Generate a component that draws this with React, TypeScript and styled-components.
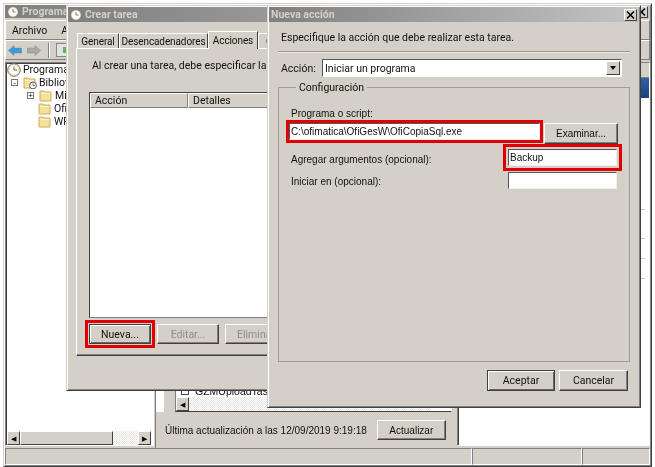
import styled, { createGlobalStyle } from 'styled-components';

const GlobalStyle = createGlobalStyle`
  html, body { margin: 0; padding: 0; background: #fff; }
  * { box-sizing: border-box; }
`;

const face = '#d4d0c8';
const tahoma = `Roboto, "Open Sans", sans-serif`;
const arial = `"Liberation Sans", Arial, sans-serif`;

const Desktop = styled.div`
  position: relative;
  width: 655px;
  height: 467px;
  background: #fff;
  overflow: hidden;
  font-family: ${tahoma};
  font-size: 10.5px;
  color: #111;
  filter: blur(0.35px);
`;

const Win = styled.div<{ $l: number; $t: number; $w: number; $h: number }>`
  position: absolute;
  isolation: isolate;
  left: ${(p) => p.$l}px;
  top: ${(p) => p.$t}px;
  width: ${(p) => p.$w}px;
  height: ${(p) => p.$h}px;
  background: ${face};
  border: 1px solid;
  border-color: ${face} #404040 #404040 ${face};
  box-shadow: inset 1px 1px 0 #fff, inset -1px -1px 0 #808080;
  padding: 1px;
  display: flex;
  flex-direction: column;
  overflow: hidden;
`;

const Title = styled.div<{ $h?: number }>`
  flex: none;
  height: ${(p) => p.$h ?? 15}px;
  display: flex;
  align-items: center;
  gap: 3px;
  padding: 0 2px;
  background: linear-gradient(90deg, #808080, #c4c4c4);
  color: ${face};
  font-family: ${tahoma};
  font-weight: 700;
  font-size: 10.5px;
  white-space: nowrap;
`;

const TitleText = styled.span`
  flex: 1;
`;

const CloseBtn = styled.div`
  flex: none;
  width: 13px;
  height: 12px;
  background: ${face};
  border: 1px solid;
  border-color: #fff #404040 #404040 #fff;
  color: #000;
  display: grid;
  place-items: center;
  svg { display: block; }
`;

const Close = () => (
  <CloseBtn>
    <svg width="9" height="8" viewBox="0 0 9 8">
      <path d="M1 0.5 L8 7.5 M8 0.5 L1 7.5" stroke="#000" strokeWidth="1.5" />
    </svg>
  </CloseBtn>
);

const ClockIcon = ({ size = 14 }: { size?: number }) => (
  <svg width={size} height={size} viewBox="0 0 14 14" style={{ flex: 'none' }}>
    <circle cx="7" cy="7" r="6.3" fill="#efe6c8" stroke="#7a7466" />
    <circle cx="7" cy="7" r="4.4" fill="#fff" />
    <path d="M7 3.5 V7 H10" stroke="#666" strokeWidth="1" fill="none" />
  </svg>
);

const FolderIcon = ({ clock }: { clock?: boolean }) => (
  <svg width="14" height="13" viewBox="0 0 14 13" style={{ flex: 'none' }}>
    <path d="M1 2 H5 L6 3 H12 V12 H1 Z" fill="#f6e09a" stroke="#c9ae62" />
    <path d="M2 4.5 H11" stroke="#fdf2c4" />
    {clock && (
      <>
        <circle cx="10" cy="9.5" r="3.4" fill="#fff" stroke="#555" />
        <path d="M10 7.5 V9.5 H12" stroke="#555" fill="none" strokeWidth="0.8" />
      </>
    )}
  </svg>
);

// ---- main window

const MenuBar = styled.div`
  flex: none;
  height: 20px;
  margin-top: 2px;
  display: flex;
  align-items: center;
  gap: 14px;
  padding-left: 6px;
  border: 1px solid;
  border-color: #fff #808080 #808080 #fff;
`;

const ToolBar = styled.div`
  flex: none;
  height: 20px;
  display: flex;
  align-items: center;
  gap: 5px;
  padding-left: 2px;
  border: 1px solid;
  border-color: #fff #808080 #808080 #fff;
`;

const ToolSep = styled.div`
  width: 2px;
  height: 15px;
  margin: 0 1px 0 2px;
  border-left: 1px solid #808080;
  border-right: 1px solid #fff;
`;

const ToolButton = styled.div`
  width: 15px;
  height: 14px;
  background: #dfe3e6;
  border: 1px solid #8a8a8a;
  display: flex;
  align-items: center;
  justify-content: flex-end;
  padding-right: 2px;
`;

const ToolDot = styled.div`
  width: 5px;
  height: 6px;
  background: #6fae5a;
`;

const Arrow = ({ fill, flip }: { fill: string; flip?: boolean }) => (
  <svg width="14" height="11" viewBox="0 0 14 11" style={{ transform: flip ? 'scaleX(-1)' : undefined }}>
    <path d="M0.5 5.5 L6 0.5 V3 H13.5 V8 H6 V10.5 Z" fill={fill} stroke="#777" strokeWidth="0.4" />
  </svg>
);

const Body = styled.div`
  flex: 1;
  min-height: 0;
  display: grid;
  grid-template-columns: 149px 303px 1fr;
  gap: 0;
  padding-top: 2px;
`;

const Inset = styled.div`
  border: 1px solid;
  border-color: #808080 #fff #fff #808080;
  box-shadow: inset 1px 1px 0 #404040;
`;

const TreePane = styled(Inset)`
  background: #fff;
  display: flex;
  flex-direction: column;
  padding: 0 2px 0 1px;
  margin-bottom: 2px;
`;

const TreeRow = styled.div<{ $depth: number }>`
  flex: none;
  height: 13px;
  display: flex;
  align-items: center;
  gap: 2px;
  padding-left: ${(p) => p.$depth}px;
  white-space: nowrap;
  font-size: 10.5px;
`;

const Expander = styled.div`
  flex: none;
  width: 7px;
  height: 7px;
  margin-right: 3px;
  border: 1px solid #777;
  font: 8px/5px ${arial};
  text-align: center;
  color: #000;
`;

const TreeSpacer = styled.div`
  flex: 1;
`;

const ScrollBar = styled.div`
  flex: none;
  height: 14px;
  display: flex;
`;

const ScrollBtn = styled.div`
  flex: none;
  width: 13px;
  background: ${face};
  border: 1px solid;
  border-color: #fff #404040 #404040 #fff;
  display: grid;
  place-items: center;
  font: 7px/1 ${arial};
  color: #000;
`;

const Thumb = styled(ScrollBtn)<{ $w: string }>`
  width: ${(p) => p.$w};
`;

const Track = styled.div`
  flex: 1;
  background: repeating-conic-gradient(#e8e6e0 0% 25%, #fff 0% 50%) 0 0 / 2px 2px;
`;

const MiddlePane = styled.div`
  display: flex;
  flex-direction: column;
  border-left: 1px solid #808080;
  margin-left: 1px;
`;

const MiddleTop = styled.div`
  flex: 1;
  min-height: 0;
  display: flex;
`;

const WhiteStrip = styled.div`
  flex: none;
  width: 8px;
  background: #fff;
`;

const TaskBox = styled.div`
  flex: 1;
  margin: 0 5px 0 11px;
  border: 1px solid;
  border-color: #808080 #fff #404040 #808080;
  background: #fff;
  display: flex;
  flex-direction: column;
  justify-content: flex-end;
`;

const TaskRow = styled.div`
  display: flex;
  align-items: center;
  gap: 6px;
  height: 13px;
  padding-left: 5px;
  font-family: ${arial};
  font-size: 10.5px;
`;

const TaskCheck = styled.div`
  width: 8px;
  height: 8px;
  border: 1px solid #444;
`;

const TaskScroll = styled(ScrollBar)`
  padding-right: 20px;
`;

const MiddleFooter = styled.div`
  flex: none;
  height: 36px;
  display: flex;
  align-items: center;
  gap: 10px;
  padding: 0 0 0 9px;
  font-family: ${arial};
  font-size: 10px;
  white-space: nowrap;
`;

const RightPane = styled(Inset)`
  background: #fff;
  display: flex;
  flex-direction: column;
  margin: 0 0 2px 0;
`;

const RightHead = styled.div`
  flex: none;
  height: 15px;
  background: ${face};
  border-bottom: 1px solid #808080;
`;

const RightBlue = styled.div`
  flex: none;
  height: 20px;
  background: linear-gradient(#2e62a8, #1d3f7d);
`;

const RightRows = styled.div`
  display: flex;
  flex-direction: column;
  align-items: flex-end;
  padding-right: 4px;
`;

const RightTick = styled.div<{ $top: number }>`
  width: 5px;
  height: 1px;
  margin-top: ${(p) => p.$top}px;
  background: #c4c4c4;
`;

const RightArrow = styled.div`
  width: 0;
  height: 0;
  margin: 7px 4px 0 0;
  border: 3.5px solid transparent;
  border-left: 4px solid #000;
  border-right: 0;
`;

const StatusBar = styled.div`
  flex: none;
  height: 17px;
  display: grid;
  grid-template-columns: 467px 110px 1fr;
`;

const StatusCell = styled.div`
  border: 1px solid;
  border-color: #808080 #fff #fff #808080;
`;

// ---- crear tarea

const TabStrip = styled.div`
  flex: none;
  height: 23px;
  display: flex;
  align-items: flex-end;
  padding: 0 0 0 9px;
  margin-top: 3px;
`;

const Tab = styled.div<{ $on?: boolean; $w: number }>`
  flex: none;
  width: ${(p) => p.$w}px;
  height: ${(p) => (p.$on ? 18 : 15)}px;
  margin-bottom: ${(p) => (p.$on ? -1 : 0)}px;
  display: grid;
  place-items: center;
  background: ${face};
  border: 1px solid;
  border-bottom: 0;
  border-color: #fff #404040 transparent #fff;
  font-size: 10px;
  letter-spacing: -0.1px;
  white-space: nowrap;
  position: relative;
  z-index: ${(p) => (p.$on ? 1 : 0)};
`;

const TabPage = styled.div`
  flex: none;
  height: 308px;
  margin: 0 8px;
  border: 1px solid;
  border-color: #fff #404040 #404040 #fff;
  box-shadow: inset -1px -1px 0 #808080;
  padding: 0 12px;
  display: flex;
  flex-direction: column;
`;

const Lead = styled.div`
  height: 43px;
  padding: 10px 3px 0;
  white-space: nowrap;
`;

const ActionsList = styled.div`
  flex: none;
  height: 226px;
  background: #fff;
  border: 1px solid;
  border-color: #404040 #fff #808080 #404040;
  display: flex;
  flex-direction: column;
`;

const ListHead = styled.div`
  flex: none;
  height: 15px;
  display: flex;
  background: ${face};
`;

const HeadCell = styled.div<{ $w: number }>`
  width: ${(p) => p.$w}px;
  padding-left: 4px;
  line-height: 14px;
  border: 1px solid;
  border-color: #fff #808080 #808080 #fff;
`;

const ButtonRow = styled.div`
  flex: none;
  display: flex;
  gap: 6px;
  margin-top: 6px;
`;

const Button = styled.div<{ $w: number; $h?: number; $off?: boolean; $def?: boolean; $font?: string; $size?: number }>`
  flex: none;
  width: ${(p) => p.$w}px;
  height: ${(p) => p.$h ?? 20}px;
  background: ${face};
  border: 1px solid;
  border-color: ${(p) => (p.$def ? '#404040' : `#fff #404040 #404040 #fff`)};
  box-shadow: ${(p) => (p.$def ? 'inset 1px 1px 0 #fff, inset -1px -1px 0 #666' : 'inset -1px -1px 0 #808080')};
  display: grid;
  place-items: center;
  font-family: ${(p) => p.$font ?? tahoma};
  font-size: ${(p) => p.$size ?? 10.5}px;
  color: ${(p) => (p.$off ? '#8f8d86' : '#111')};
  white-space: nowrap;
`;

const Marked = styled(Button)`
  outline: 3px solid #e00000;
  outline-offset: 1px;
`;

// ---- nueva accion

const DialogBody = styled.div`
  flex: 1;
  min-height: 0;
  padding: 0 9px;
  display: flex;
  flex-direction: column;
`;

const Intro = styled.div`
  flex: none;
  height: 31px;
  padding: 9px 3px 0;
  border-bottom: 2px groove #eeeae2;
  font-size: 10.5px;
  white-space: nowrap;
`;

const ActionRow = styled.div`
  flex: none;
  display: flex;
  align-items: center;
  height: 18px;
  padding-left: 3px;
  margin-top: 6px;
`;

const ActionLabel = styled.span`
  width: 41px;
`;

const Select = styled.div`
  width: 300px;
  height: 18px;
  background: #fff;
  border: 1px solid;
  border-color: #555 #fff #fff #555;
  display: flex;
  align-items: center;
  justify-content: space-between;
  padding-left: 2px;
`;

const SelectBtn = styled.div`
  width: 14px;
  height: 14px;
  margin-right: 1px;
  background: ${face};
  border: 1px solid;
  border-color: #fff #404040 #404040 #fff;
  display: grid;
  place-items: center;
`;

const Caret = styled.div`
  width: 0;
  height: 0;
  border: 3.5px solid transparent;
  border-top: 4px solid #000;
  border-bottom: 0;
`;

const Group = styled.fieldset`
  flex: none;
  height: 281px;
  margin: 4px 0 0;
  padding: 13px 9px 0 12px;
  border: 1px solid #a09d96;
  display: flex;
  flex-direction: column;
  font-family: ${arial};
  font-size: 10px;
  min-inline-size: 0;
`;

const Legend = styled.legend`
  padding: 0 3px;
  margin-left: 5px;
  font-family: ${tahoma};
  font-size: 10.5px;
`;

const PathLabel = styled.div`
  height: 14px;
  line-height: 14px;
`;

const PathRow = styled.div`
  display: flex;
  gap: 4px;
  margin-left: -2px;
  margin-top: 2px;
`;

const Field = styled.div<{ $w: number; $mark?: number }>`
  flex: none;
  width: ${(p) => p.$w}px;
  height: 17px;
  background: #fff;
  border: 1px solid;
  border-color: #555 #eee #eee #555;
  padding: 0 1px;
  line-height: 15px;
  font-family: ${arial};
  font-size: 10px;
  white-space: nowrap;
  ${(p) => p.$mark !== undefined && `outline: 3px solid #e00000; outline-offset: ${p.$mark}px;`}
`;

const ArgRow = styled.div<{ $top: number }>`
  display: flex;
  align-items: center;
  justify-content: space-between;
  margin-top: ${(p) => p.$top}px;
  padding-right: 3px;
`;

const ArgLabel = styled.span<{ $drop: number }>`
  padding-top: ${(p) => p.$drop}px;
`;

const Footer = styled.div`
  flex: none;
  display: flex;
  justify-content: flex-end;
  gap: 4px;
  padding: 8px 2px 0 0;
`;

export default function App() {
  return (
    <Desktop>
      <GlobalStyle />

      <Win $l={3} $t={3} $w={649} $h={464}>
        <Title $h={13}>
          <ClockIcon size={12} />
          <TitleText>Programador de tareas</TitleText>
          <Close />
        </Title>
        <MenuBar>
          <span>Archivo</span>
          <span>Acción</span>
        </MenuBar>
        <ToolBar>
          <Arrow fill="#3a9be0" />
          <Arrow fill="#a8a8a4" flip />
          <ToolSep />
          <ToolButton>
            <ToolDot />
          </ToolButton>
        </ToolBar>
        <Body>
          <TreePane>
            <TreeRow $depth={0}>
              <ClockIcon />
              <span>Programador</span>
            </TreeRow>
            <TreeRow $depth={4}>
              <Expander>-</Expander>
              <FolderIcon clock />
              <span>Biblioteca</span>
            </TreeRow>
            <TreeRow $depth={20}>
              <Expander>+</Expander>
              <FolderIcon />
              <span>Microsoft</span>
            </TreeRow>
            <TreeRow $depth={31}>
              <FolderIcon />
              <span>OfiCopia</span>
            </TreeRow>
            <TreeRow $depth={31}>
              <FolderIcon />
              <span>WPD</span>
            </TreeRow>
            <TreeSpacer />
            <ScrollBar>
              <ScrollBtn>◀</ScrollBtn>
              <Thumb $w="93px" />
              <Track />
              <ScrollBtn>▶</ScrollBtn>
            </ScrollBar>
          </TreePane>
          <MiddlePane>
            <MiddleTop>
              <WhiteStrip />
              <TaskBox>
                <TaskRow>
                  <TaskCheck />
                  <span>GZMUploadTask</span>
                </TaskRow>
                <TaskScroll>
                  <ScrollBtn>◀</ScrollBtn>
                  <Track />
                </TaskScroll>
              </TaskBox>
            </MiddleTop>
            <MiddleFooter>
              <span>Última actualización a las 12/09/2019 9:19:18</span>
              <Button $w={69} $font={arial} $size={10}>Actualizar</Button>
            </MiddleFooter>
          </MiddlePane>
          <RightPane>
            <RightHead />
            <RightBlue />
            <RightRows>
              <RightTick $top={111} />
              <RightTick $top={28} />
              <RightArrow />
              <RightTick $top={6} />
              <RightTick $top={19} />
            </RightRows>
          </RightPane>
        </Body>
        <StatusBar>
          <StatusCell />
          <StatusCell />
          <StatusCell />
        </StatusBar>
      </Win>

      <Win $l={66} $t={5} $w={574} $h={386}>
        <Title>
          <ClockIcon size={12} />
          <TitleText>Crear tarea</TitleText>
        </Title>
        <TabStrip>
          <Tab $w={42}>General</Tab>
          <Tab $w={89}>Desencadenadores</Tab>
          <Tab $on $w={50}>Acciones</Tab>
          <Tab $w={70}>Condiciones</Tab>
        </TabStrip>
        <TabPage>
          <Lead>Al crear una tarea, debe especificar la acción que se realizará al iniciarse.</Lead>
          <ActionsList>
            <ListHead>
              <HeadCell $w={98}>Acción</HeadCell>
              <HeadCell $w={200}>Detalles</HeadCell>
            </ListHead>
          </ActionsList>
          <ButtonRow>
            <Marked $w={62} $def>Nueva...</Marked>
            <Button $w={62} $off>Editar...</Button>
            <Button $w={62} $off>Eliminar</Button>
          </ButtonRow>
        </TabPage>
      </Win>

      <Win $l={267} $t={5} $w={374} $h={403}>
        <Title>
          <TitleText>Nueva acción</TitleText>
          <Close />
        </Title>
        <DialogBody>
          <Intro>Especifique la acción que debe realizar esta tarea.</Intro>
          <ActionRow>
            <ActionLabel>Acción:</ActionLabel>
            <Select>
              <span>Iniciar un programa</span>
              <SelectBtn>
                <Caret />
              </SelectBtn>
            </Select>
          </ActionRow>
          <Group>
            <Legend>Configuración</Legend>
            <PathLabel>Programa o script:</PathLabel>
            <PathRow>
              <Field $w={251} $mark={0}>C:\ofimatica\OfiGesW\OfiCopiaSql.exe</Field>
              <Button $w={74} $h={21} $font={arial} $size={10}>Examinar...</Button>
            </PathRow>
            <ArgRow $top={5}>
              <ArgLabel $drop={4}>Agregar argumentos (opcional):</ArgLabel>
              <Field $w={109} $mark={2}>Backup</Field>
            </ArgRow>
            <ArgRow $top={6}>
              <ArgLabel $drop={2}>Iniciar en (opcional):</ArgLabel>
              <Field $w={109} />
            </ArgRow>
          </Group>
          <Footer>
            <Button $w={68} $h={21} $def>Aceptar</Button>
            <Button $w={69} $h={21}>Cancelar</Button>
          </Footer>
        </DialogBody>
      </Win>
    </Desktop>
  );
}
